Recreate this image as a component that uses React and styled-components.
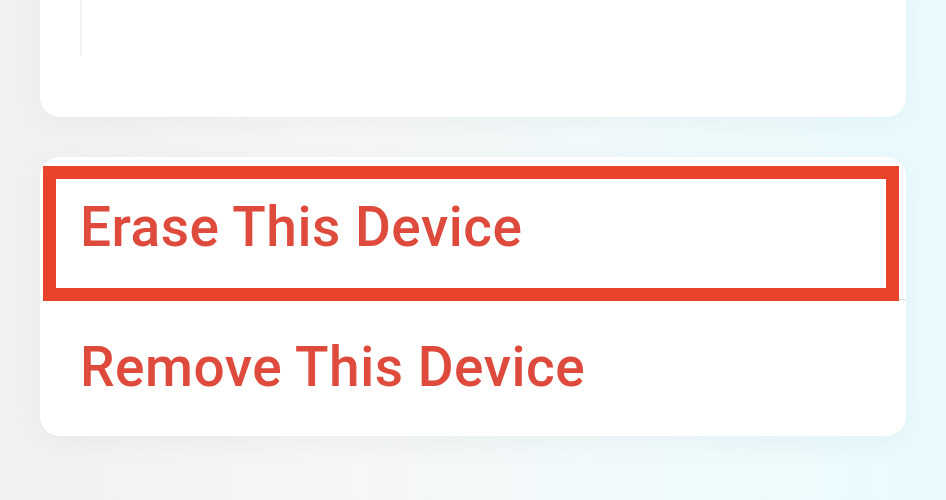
import React from "react";
import styled, { createGlobalStyle } from "styled-components";

const Global = createGlobalStyle`
  html, body { margin: 0; padding: 0; }
  body {
    width: 946px;
    height: 500px;
    overflow: hidden;
    background: linear-gradient(90deg, #f1f1f1 0%, #f6f6f6 35%, #f1fafb 65%, #e9fbfe 100%);
    font-family: Roboto, "Liberation Sans", Arial, sans-serif;
  }
`;

const Page = styled.div`
  display: flex;
  flex-direction: column;
  gap: 40px;
  padding: 0 40px 0 40px;
  width: 866px;
`;

const Card = styled.div`
  background: #ffffff;
  border-radius: 20px;
  box-shadow: 0 6px 26px rgba(120, 130, 135, 0.07);
  overflow: hidden;
  position: relative;
`;

const TopCard = styled(Card)`
  margin-top: -40px;
  height: 157px;
`;

const FaintRule = styled.div`
  position: absolute;
  left: 40px;
  top: 40px;
  width: 2px;
  height: 56px;
  background: #f3f3f3;
`;

const Row = styled.div`
  position: relative;
  height: ${(p) => p.$h}px;
  display: flex;
  align-items: center;
  padding-left: 40px;
  color: #de4a3b;
  font-size: 55px;
  font-weight: 500;
  letter-spacing: 0.5px;
  ${(p) =>
    p.$divider &&
    `&::after {
      content: "";
      position: absolute;
      left: 40px;
      right: 0;
      bottom: 0;
      height: 1px;
      background: #dedede;
    }`}
`;

const Label = styled.span`
  line-height: 1;
  transform: translateY(-1px);
`;

const Highlight = styled.div`
  position: absolute;
  left: 3px;
  top: 9px;
  right: 7px;
  bottom: -1px;
  border: 13px solid #e8432b;
  z-index: 2;
  pointer-events: none;
`;

export default function App() {
  return (
    <>
      <Global />
      <Page>
        <TopCard>
          <FaintRule />
        </TopCard>
        <Card>
          <Row $h={143} $divider>
            <Label>Erase This Device</Label>
            <Highlight />
          </Row>
          <Row $h={136}>
            <Label>Remove This Device</Label>
          </Row>
        </Card>
      </Page>
    </>
  );
}
